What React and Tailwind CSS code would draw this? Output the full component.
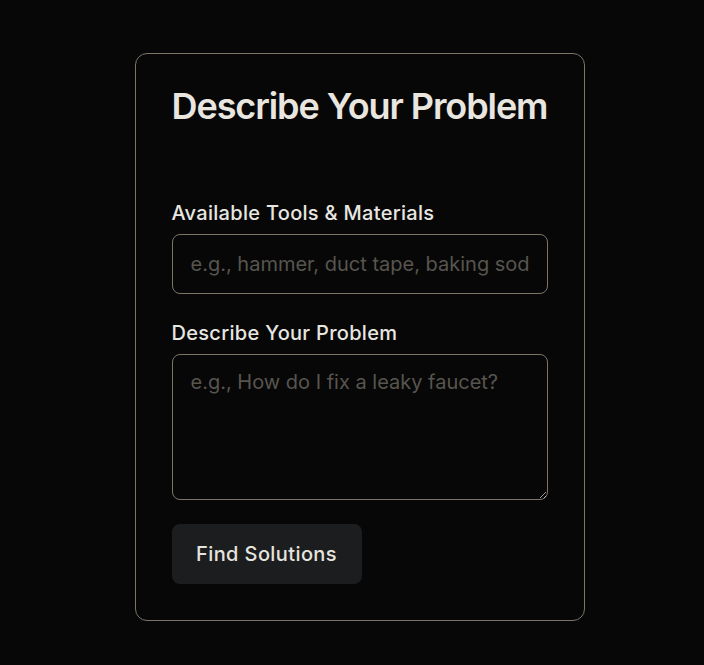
import React, { useState } from 'react';

function App() {
  const [tools, setTools] = useState('');
  const [problem, setProblem] = useState('');

  return (
    <div className="min-h-screen bg-[#070707] text-[#e8e6e1] flex justify-center pt-[53px] pl-[15px] font-['Inter',sans-serif]">
      <div className="w-[450px] self-start border border-[#7d7468] rounded-xl px-9 pt-8 pb-9 flex flex-col">
        <h1 className="text-4xl font-semibold tracking-[-0.03em] text-[#e9e6e0] whitespace-nowrap">Describe Your Problem</h1>

        <form onSubmit={(e) => e.preventDefault()} className="flex flex-col mt-[73px]">
          <label className="text-[20px] leading-7 font-medium tracking-[0.015em] mb-[7px]">Available Tools &amp; Materials</label>
          <input
            type="text"
            value={tools}
            onChange={(e) => setTools(e.target.value)}
            placeholder="e.g., hammer, duct tape, baking soda"
            className="w-full h-[60px] bg-transparent border border-[#7d7468] rounded-lg px-[18px] text-[20px] placeholder:text-[#58554f] outline-none"
          />

          <label className="text-[20px] leading-7 font-medium tracking-[0.015em] mt-[25px] mb-[7px]">Describe Your Problem</label>
          <textarea
            value={problem}
            onChange={(e) => setProblem(e.target.value)}
            placeholder="e.g., How do I fix a leaky faucet?"
            className="w-full h-[146px] bg-transparent border border-[#7d7468] rounded-lg px-[18px] pt-[13px] text-[20px] leading-7 placeholder:text-[#58554f] outline-none"
          />

          <button type="submit" className="mt-6 w-[190px] h-[60px] bg-[#1c1d1f] rounded-lg text-[20px] font-medium tracking-[0.02em] text-[#e6e4df]">
            Find Solutions
          </button>
        </form>
      </div>
    </div>
  );
}

export default App;
